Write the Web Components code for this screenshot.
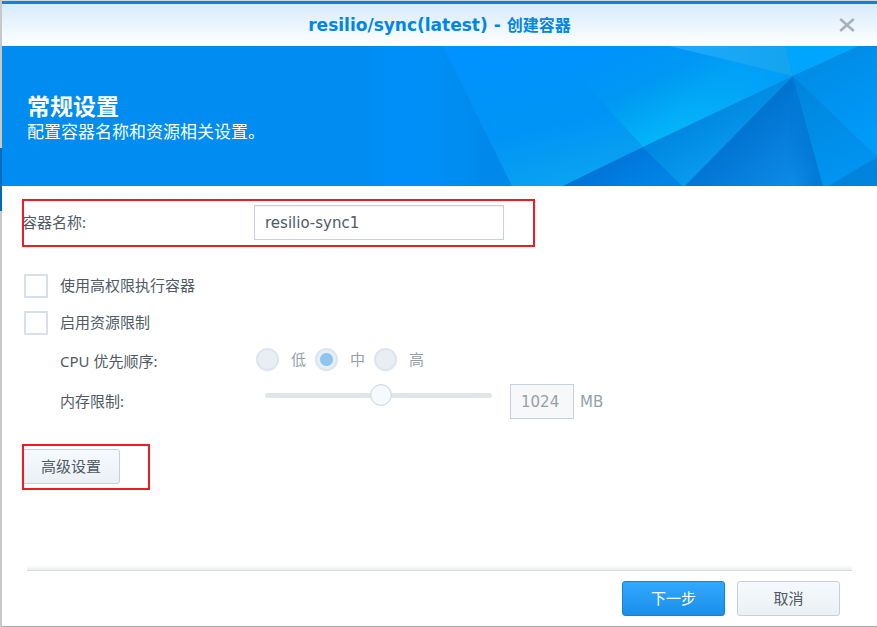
<!DOCTYPE html>
<html lang="zh-CN">
<head>
<meta charset="utf-8">
<title>resilio/sync(latest) - 创建容器</title>
<style>
  :root {
    --color-text: #505a64;
    --color-muted: #969fa9;
    --color-border: #c6d1dc;
    --color-primary: #0086e5;
    --font-ui: "DejaVu Sans", "Noto Sans CJK SC", sans-serif;
    --font-label: "Noto Sans", "Noto Sans CJK SC", sans-serif;
  }

  body {
    margin: 0;
    font: 15px/22px var(--font-label);
    color: var(--color-text);
    background: linear-gradient(#c8c8c8 148px, #006bb8 148px, #006bb8 211px, #c8c8c8 211px);
  }
</style>
</head>
<body>
<wizard-dialog>
  <span slot="title">resilio/sync(latest) -</span>
  <span slot="action">创建容器</span>

  <wizard-banner slot="banner">
    <span slot="heading">常规设置</span>
    <span slot="description">配置容器名称和资源相关设置。</span>
  </wizard-banner>

  <marked-area class="name">
    <text-field value="resilio-sync1">容器名称:</text-field>
  </marked-area>

  <container-options>
    <check-option>使用高权限执行容器</check-option>
    <check-option>启用资源限制</check-option>
    <cpu-priority>CPU 优先顺序:</cpu-priority>
    <memory-limit value="1024" unit="MB">内存限制:</memory-limit>
  </container-options>

  <marked-area class="advanced">
    <push-button>高级设置</push-button>
  </marked-area>

  <push-button slot="footer" class="wide" primary>下一步</push-button>
  <push-button slot="footer" class="wide">取消</push-button>
</wizard-dialog>

<script>
/**
 * Dialog window: title bar, banner, body and footer
 */
class WizardDialog extends HTMLElement {
  constructor() {
    super();
    this.attachShadow({ mode: 'open' });
  }

  connectedCallback() {
    this.shadowRoot.innerHTML = `
      <style>
        :host {
          display: flex;
          flex-direction: column;
          box-sizing: border-box;
          min-height: 100vh;
          margin-left: 2px;
          border-top: 1px solid #d2d6da;
          border-bottom: 1px solid #a9a9a9;
          background: #fff;
        }

        header {
          display: grid;
          grid-template-columns: 1fr auto 1fr;
          align-items: center;
          height: 42px;
          border-top: 3px solid var(--color-primary);
          background: linear-gradient(#d7eafa, #fff);
        }

        h1 {
          grid-column: 2;
          display: flex;
          align-items: baseline;
          gap: 6px;
          margin: 0;
          font: bold 17px/24px var(--font-ui);
          color: var(--color-primary);
        }

        .action {
          font-size: 16px;
        }

        .close {
          justify-self: end;
          display: flex;
          margin-right: 20px;
          padding: 0;
          border: 0;
          background: none;
          cursor: pointer;
        }

        main {
          flex: 1;
          padding: 13px 20px 0;
        }

        footer {
          padding: 0 25px 10px;
        }

        .line {
          height: 5px;
          margin-bottom: 10px;
          border-bottom: 1px solid #d9dedd;
          background: linear-gradient(#fff, #eceeed);
        }

        .buttons {
          display: flex;
          justify-content: flex-end;
          gap: 12px;
          padding-right: 12px;
        }
      </style>

      <header>
        <h1>
          <slot name="title"></slot>
          <span class="action"><slot name="action"></slot></span>
        </h1>
        <button class="close" type="button" aria-label="关闭">
          <svg width="20" height="20" viewBox="0 0 20 20" fill="none" stroke="#a8b0b8" stroke-width="2.6">
            <path d="M3.2 4 16.8 16M16.8 4 3.2 16"/>
          </svg>
        </button>
      </header>
      <slot name="banner"></slot>
      <main><slot></slot></main>
      <footer>
        <div class="line"></div>
        <div class="buttons"><slot name="footer"></slot></div>
      </footer>
    `;
  }
}

/**
 * Blue banner with the step's heading and a faceted pattern
 */
class WizardBanner extends HTMLElement {
  constructor() {
    super();
    this.attachShadow({ mode: 'open' });
  }

  connectedCallback() {
    this.shadowRoot.innerHTML = `
      <style>
        :host {
          display: flex;
          justify-content: space-between;
          align-items: center;
          overflow: hidden;
          height: 140px;
          background: #008cf1;
          color: #fff;
        }

        .text {
          flex: 1;
          padding: 4px 0 0 25px;
          white-space: nowrap;
        }

        h2 {
          margin: 0;
          font-size: 23px;
          line-height: 28px;
        }

        p {
          margin: 0;
          font-size: 17px;
          line-height: 24px;
        }

        svg {
          flex: none;
        }
      </style>

      <div class="text">
        <h2><slot name="heading"></slot></h2>
        <p><slot name="description"></slot></p>
      </div>
      <svg width="517" height="140" viewBox="0 0 517 140" aria-hidden="true">
        <defs>
          <linearGradient id="base" gradientUnits="userSpaceOnUse" x1="0" y1="0" x2="125" y2="0"><stop offset="0" stop-color="#008cf1"/><stop offset=".3" stop-color="#008ff9"/><stop offset=".6" stop-color="#008ff6"/><stop offset="1" stop-color="#0089eb"/></linearGradient>
          <linearGradient id="wide" x1=".2" y1="0" x2=".55" y2="1"><stop offset="0" stop-color="#0092ff"/><stop offset=".6" stop-color="#0094f5"/><stop offset="1" stop-color="#0aa2f2"/></linearGradient>
          <linearGradient id="glow" gradientUnits="userSpaceOnUse" x1="277" y1="-15" x2="328" y2="90"><stop offset="0" stop-color="#0092fd"/><stop offset=".45" stop-color="#0098f3"/><stop offset="1" stop-color="#04bafa"/></linearGradient>
          <linearGradient id="tip" gradientUnits="userSpaceOnUse" x1="320" y1="0" x2="433" y2="0"><stop offset="0" stop-color="#009cf8" stop-opacity="0"/><stop offset="1" stop-color="#009cf8"/></linearGradient>
          <linearGradient id="top"><stop offset="0" stop-color="#1ea9ff"/><stop offset="1" stop-color="#14a4ee"/></linearGradient>
          <linearGradient id="low" x1="0" y1="0" x2="1" y2=".5"><stop offset="0" stop-color="#0068cf"/><stop offset="1" stop-color="#0084e6"/></linearGradient>
          <linearGradient id="mid" gradientUnits="userSpaceOnUse" x1="345" y1="70" x2="368" y2="110"><stop offset="0" stop-color="#0088e2"/><stop offset="1" stop-color="#0899ed"/></linearGradient>
          <linearGradient id="dark" gradientUnits="userSpaceOnUse" x1="380" y1="80" x2="430" y2="140"><stop offset="0" stop-color="#0073cf"/><stop offset="1" stop-color="#0d8ae7"/></linearGradient>
          <linearGradient id="edge" gradientUnits="userSpaceOnUse" x1="425" y1="110" x2="455" y2="103"><stop offset="0" stop-color="#0078d4" stop-opacity="0"/><stop offset="1" stop-color="#0078d4"/></linearGradient>
          <linearGradient id="fan" x1="0" y1="0" x2=".3" y2="1"><stop offset="0" stop-color="#0084dc"/><stop offset="1" stop-color="#0094f0"/></linearGradient>
          <linearGradient id="side" x1="0" y1="0" x2=".4" y2="1"><stop offset="0" stop-color="#0088e2"/><stop offset="1" stop-color="#009af8"/></linearGradient>
        </defs>
        <path fill="url(#base)" d="M0 0H83L152 140H0Z"/>
        <path fill="url(#wide)" d="M83 0H190L283 101 203 140H152Z"/>
        <path fill="url(#glow)" d="M190 0H309L433 30 283 101Z"/>
        <path fill="url(#tip)" d="M190 0H309L433 30 283 101Z"/>
        <path fill="url(#top)" d="M309 0H426L433 30Z"/>
        <path fill="#00a5fd" d="M426 0H499L433 30Z"/>
        <path fill="url(#low)" d="M203 140 283 101 322 140Z"/>
        <path fill="url(#mid)" d="M283 101 433 30 325 140H322Z"/>
        <path fill="url(#dark)" d="M433 30 463 140H325Z"/>
        <path fill="url(#edge)" d="M433 30 463 140H425Z"/>
        <path fill="url(#side)" d="M433 30 499 0H517V111Z"/>
        <path fill="url(#fan)" d="M433 30 517 111 469 140H463Z"/>
        <path fill="#0083dc" d="M517 111V140H469Z"/>
      </svg>
    `;
  }
}

/**
 * Red frame drawn over the content it holds
 */
class MarkedArea extends HTMLElement {
  constructor() {
    super();
    this.attachShadow({ mode: 'open' });
  }

  connectedCallback() {
    this.shadowRoot.innerHTML = `
      <style>
        :host {
          display: block;
          position: relative;
          box-sizing: border-box;
          max-width: 100%;
        }

        :host(.name) {
          width: 513px;
          padding: 6px 0 7px;
        }

        :host(.advanced) {
          width: 128px;
          margin-top: 25px;
          padding: 5px 0 6px;
        }

        :host::after {
          content: "";
          position: absolute;
          inset: 0;
          border: 2px solid #ed1c24;
          pointer-events: none;
        }
      </style>
      <slot></slot>
    `;
  }
}

/**
 * Text box with its label
 */
class TextField extends HTMLElement {
  constructor() {
    super();
    this.attachShadow({ mode: 'open' });
  }

  connectedCallback() {
    this.shadowRoot.innerHTML = `
      <style>
        :host {
          display: grid;
          grid-template-columns: 232px minmax(0, 250px);
          align-items: center;
        }

        label {
          padding-bottom: 2px;
        }

        input {
          box-sizing: border-box;
          width: 100%;
          height: 35px;
          padding: 0 10px;
          border: 1px solid var(--color-border);
          font: 15px var(--font-ui);
          color: var(--color-text);
          background: #fff;
          box-shadow: inset 0 1px 1px #f0f2f4;
        }
      </style>
      <label for="field"><slot></slot></label>
      <input id="field" type="text" value="${this.getAttribute('value')}">
    `;
  }
}

/**
 * Column of option rows
 */
class ContainerOptions extends HTMLElement {
  constructor() {
    super();
    this.attachShadow({ mode: 'open' });
  }

  connectedCallback() {
    this.shadowRoot.innerHTML = `
      <style>
        :host {
          display: flex;
          flex-direction: column;
          gap: 13px;
          margin: 27px 2px 0;
        }
      </style>
      <slot></slot>
    `;
  }
}

/**
 * Tick box with its label
 */
class CheckOption extends HTMLElement {
  constructor() {
    super();
    this.attachShadow({ mode: 'open' });
  }

  connectedCallback() {
    this.shadowRoot.innerHTML = `
      <style>
        :host {
          display: flex;
          gap: 12px;
        }

        input {
          appearance: none;
          box-sizing: border-box;
          width: 24px;
          height: 24px;
          margin: 0;
          border: 2px solid #d7e0e9;
          background: #fff;
        }

        input:checked {
          background: #3ba6f5;
        }
      </style>
      <input id="check" type="checkbox">
      <label for="check"><slot></slot></label>
    `;
  }
}

/**
 * CPU priority row
 */
class CpuPriority extends HTMLElement {
  constructor() {
    super();
    this.attachShadow({ mode: 'open' });
  }

  connectedCallback() {
    const levels = [['low', '低'], ['medium', '中'], ['high', '高']];

    this.shadowRoot.innerHTML = `
      <style>
        :host {
          display: grid;
          grid-template-columns: 196px 1fr;
          height: 23px;
          margin-left: 36px;
        }

        #name {
          line-height: 26px;
        }

        .levels {
          display: flex;
          gap: 9px;
          color: var(--color-muted);
        }

        .level {
          display: flex;
          gap: 12px;
        }

        input {
          appearance: none;
          box-sizing: border-box;
          width: 23px;
          height: 23px;
          margin: 0;
          border: 2px solid #dde6ee;
          border-radius: 50%;
          background: #e9eef2;
        }

        input:checked {
          background: radial-gradient(circle, #8dc6f2 6px, #e9eef2 7px);
        }
      </style>
      <span id="name"><slot></slot></span>
      <div class="levels" role="radiogroup" aria-labelledby="name">
        ${levels.map(([id, text]) => `
          <div class="level">
            <input id="${id}" type="radio" name="cpu" ${id === 'medium' ? 'checked' : ''} disabled>
            <label for="${id}">${text}</label>
          </div>
        `).join('')}
      </div>
    `;
  }
}

/**
 * Memory limit row: slider and amount
 */
class MemoryLimit extends HTMLElement {
  constructor() {
    super();
    this.attachShadow({ mode: 'open' });
  }

  connectedCallback() {
    this.shadowRoot.innerHTML = `
      <style>
        :host {
          display: grid;
          grid-template-columns: 205px 227px auto auto;
          justify-content: start;
          align-items: center;
          margin-left: 36px;
        }

        label {
          padding-bottom: 2px;
        }

        .slider {
          appearance: none;
          align-self: start;
          width: 227px;
          height: 22px;
          margin: 0;
          background: none;
        }

        .slider::-webkit-slider-runnable-track {
          height: 5px;
          border-radius: 3px;
          background: #e0e6e8;
        }

        .slider::-webkit-slider-thumb {
          appearance: none;
          box-sizing: border-box;
          width: 22px;
          height: 22px;
          margin-top: -9px;
          border: 1px solid #d2d9df;
          border-radius: 50%;
          background: #f5faff;
          box-shadow: inset 0 0 1px #c9d0d6;
        }

        .amount {
          box-sizing: border-box;
          width: 64px;
          height: 35px;
          margin: 0 6px 0 18px;
          padding: 0 10px;
          border: 1px solid var(--color-border);
          font: 15px var(--font-ui);
          color: var(--color-muted);
          background: #f6f8fa;
        }

        .unit {
          font-family: var(--font-ui);
          color: var(--color-muted);
        }
      </style>
      <label for="amount"><slot></slot></label>
      <input class="slider" type="range" min="0" max="100" value="51" aria-label="内存限制" disabled>
      <input class="amount" id="amount" type="text" value="${this.getAttribute('value')}" disabled>
      <span class="unit">${this.getAttribute('unit')}</span>
    `;
  }
}

/**
 * Push button, blue when it has the primary attribute
 */
class PushButton extends HTMLElement {
  constructor() {
    super();
    this.attachShadow({ mode: 'open' });
  }

  connectedCallback() {
    this.shadowRoot.innerHTML = `
      <style>
        :host {
          display: block;
        }

        button {
          display: block;
          box-sizing: border-box;
          min-width: 98px;
          height: 35px;
          padding: 0 18px 2px;
          border: 1px solid var(--color-border);
          border-radius: 3px;
          font: 15px/22px var(--font-label);
          color: var(--color-text);
          background: linear-gradient(#f6faff, #ebf0f4);
          cursor: pointer;
        }

        :host(.wide) button {
          min-width: 103px;
        }

        :host([primary]) button {
          border-color: #1480d8;
          color: #fff;
          background: linear-gradient(#33a8ff, #188fe9);
        }
      </style>
      <button type="button"><slot></slot></button>
    `;
  }
}

// Register Web Components
customElements.define('wizard-dialog', WizardDialog);
customElements.define('wizard-banner', WizardBanner);
customElements.define('marked-area', MarkedArea);
customElements.define('text-field', TextField);
customElements.define('container-options', ContainerOptions);
customElements.define('check-option', CheckOption);
customElements.define('cpu-priority', CpuPriority);
customElements.define('memory-limit', MemoryLimit);
customElements.define('push-button', PushButton);
</script>
</body>
</html>
